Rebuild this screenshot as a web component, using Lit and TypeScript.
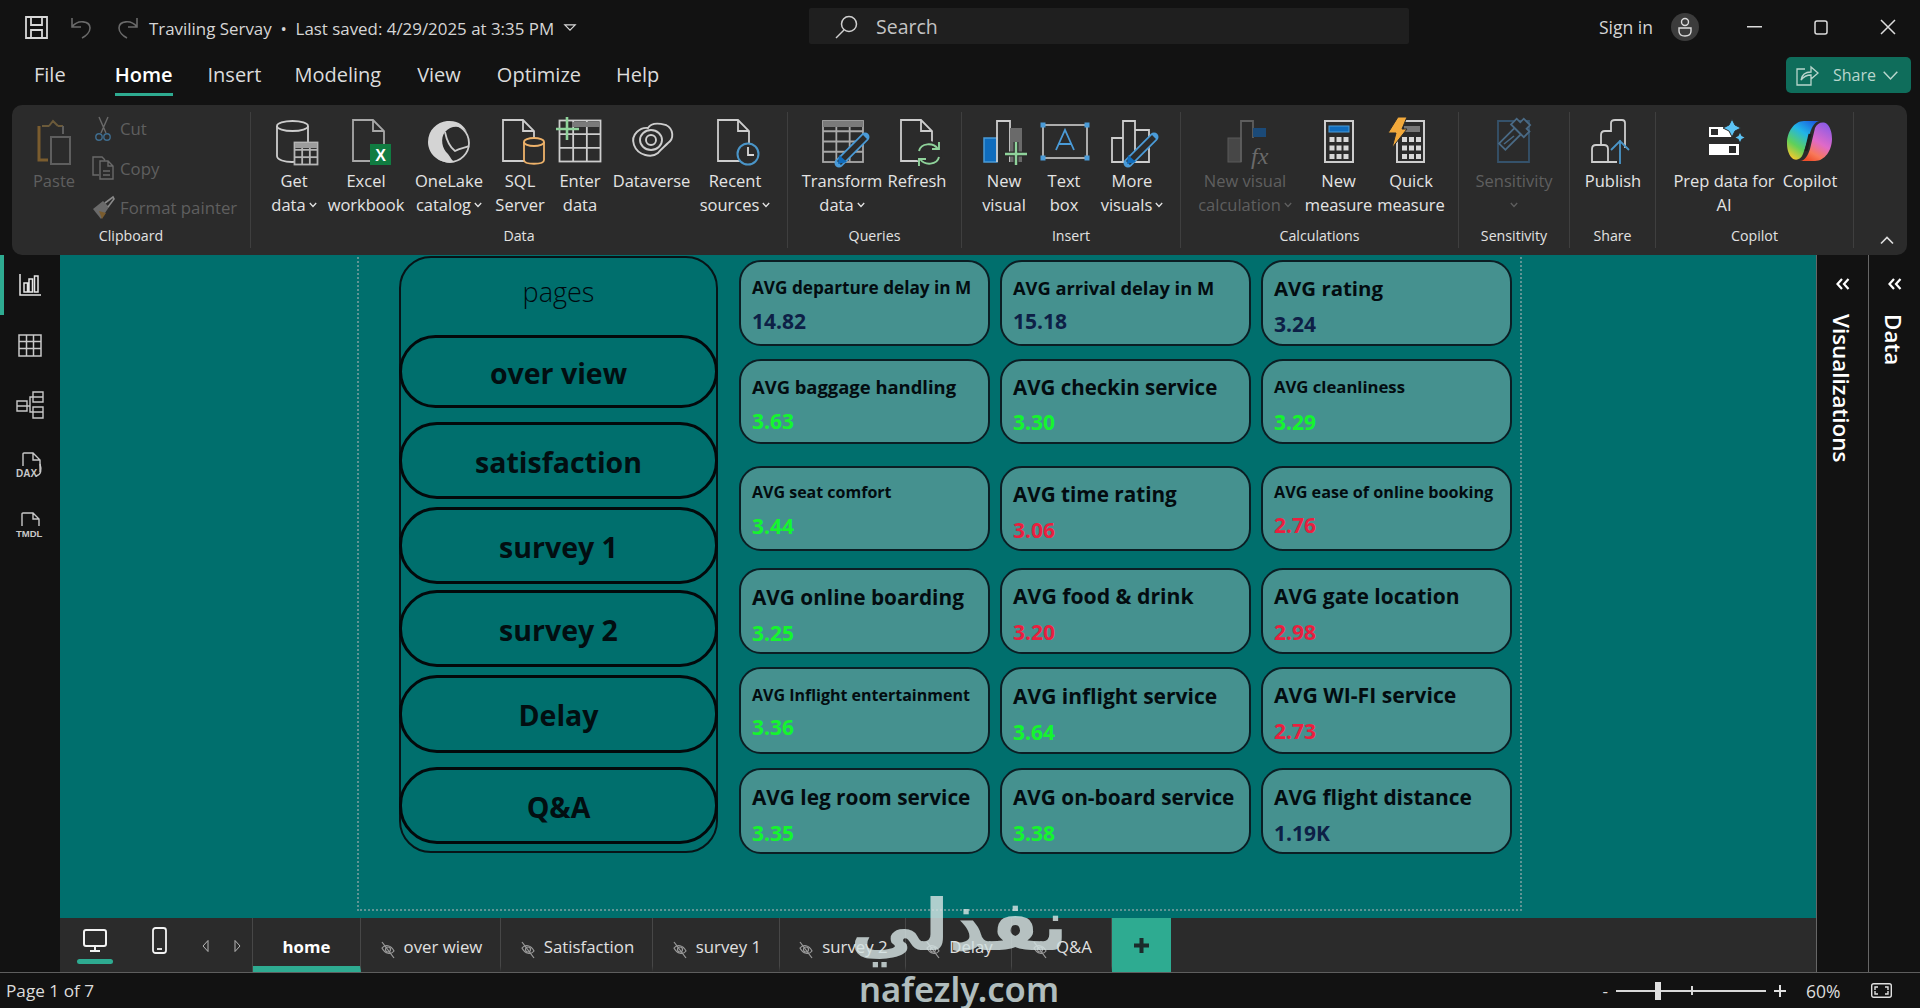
import { LitElement, html, css, svg } from "lit";
import { customElement } from "lit/decorators.js";

const S = "#cdcdcd";
const BG = "#2b2b2b";

const grid = (x: number, y: number, w: number, h: number, cols: number, rows: number, st = S, sw = 1.8) => {
  const ls = [];
  for (let i = 1; i < cols; i++) ls.push(svg`<line x1=${x + (w * i) / cols} y1=${y} x2=${x + (w * i) / cols} y2=${y + h} stroke=${st} stroke-width=${sw}/>`);
  for (let i = 1; i < rows; i++) ls.push(svg`<line x1=${x} y1=${y + (h * i) / rows} x2=${x + w} y2=${y + (h * i) / rows} stroke=${st} stroke-width=${sw}/>`);
  return svg`<rect x=${x} y=${y} width=${w} height=${h} fill=${BG} stroke=${st} stroke-width=${sw}/>${ls}`;
};
const doc = (x: number, y: number, st = S) => svg`<path d="M${x} ${y}H${x + 20}L${x + 31} ${y + 11}V${y + 41}H${x}Z M${x + 20} ${y}V${y + 11}H${x + 31}" fill="none" stroke=${st} stroke-width="1.8"/>`;
const pencil = (x1: number, y1: number, x2: number, y2: number) => svg`
  <line x1=${x1} y1=${y1} x2=${x2} y2=${y2} stroke="#4a9bd8" stroke-width="9" stroke-linecap="round"/>
  <line x1=${x1} y1=${y1} x2=${x2} y2=${y2} stroke=${BG} stroke-width="5.5"/>
  <path d="M${x2 - 1} ${y2 + 1}l1 -9 8 7z" fill="#0f6cbd"/>`;
const ic = (c: unknown) => html`<svg class="ic" width="48" height="48" viewBox="0 0 48 48" fill="none">${c}</svg>`;
const keys = (x: number, y: number, step: number) => {
  const r = [];
  for (let j = 0; j < 3; j++) for (let i = 0; i < 3; i++) r.push(svg`<rect x=${x + i * step} y=${y + j * 8.5} width="5" height="5" fill="#d8d8d8"/>`);
  return r;
};

const icons: Record<string, unknown> = {
  paste: ic(svg`<path d="M12 8H19M33 8H28M19 8l4-5 5 5" stroke="#6b5a3a" stroke-width="2"/><path d="M9 8V42H18" stroke="#7a5c2e" stroke-width="3"/><path d="M33 8V16" stroke="#5e5e5e" stroke-width="2"/><rect x="21" y="19" width="19" height="27" stroke="#5e5e5e" stroke-width="2" fill=${BG}/>`),
  get: ic(svg`<path d="M7 8V38C7 42 15 44 22 44C30 44 38 42 38 38V8" stroke=${S} stroke-width="1.8"/><ellipse cx="22.5" cy="8" rx="15.5" ry="5" stroke=${S} stroke-width="1.8"/>${grid(24.5, 24.5, 23, 22, 3, 3, "#b5b5b5")}<rect x="25" y="25" width="22" height="5" fill="#9c9c9c"/>`),
  excel: ic(svg`${doc(11, 2, "#a8a8a8")}<rect x="28" y="26" width="21" height="21" fill="#107c41"/><text x="38.5" y="42.5" text-anchor="middle" font-family="Liberation Sans" font-weight="700" font-size="16" fill="#fff">X</text>`),
  onelake: ic(svg`<circle cx="25" cy="25" r="19" stroke=${S} stroke-width="1.8"/><path d="M22 3C34 2 39 8 42 14C36 7 26 7 20 14C15 20 17 31 23 36C26 40 27 43 30 44C14 47 3 36 3 24C3 12 12 4 22 3Z" fill="#d4d4d4"/><path d="M20 14C22 24 26 30 30 33C35 30 40 30 44 28" stroke=${S} stroke-width="1.8"/>`),
  sql: ic(svg`${doc(7, 2)}<path d="M28 24V42C28 47 48 47 48 42V24" fill=${BG} stroke="#eeb26a" stroke-width="1.8"/><ellipse cx="38" cy="24" rx="10" ry="4" fill=${BG} stroke="#eeb26a" stroke-width="1.8"/>`),
  enter: ic(svg`${grid(3.5, 2.5, 41, 41, 3, 3)}<rect x="16" y="4" width="28" height="5" fill="#7a7a7a"/><path d="M0 11H23M11 -1V22" stroke="#8fd39b" stroke-width="2.6"/>`),
  dataverse: ic(svg`<path d="M6 27C2 16 13 9 20 10C24 3 34 6 38 7C46 11 46 21 40 25C36 29 33 31 30 35C24 40 10 38 6 27Z" stroke=${S} stroke-width="1.9"/><ellipse cx="23" cy="22" rx="11" ry="10" stroke=${S} stroke-width="1.9"/><circle cx="23" cy="22" r="5" stroke=${S} stroke-width="1.9"/>`),
  recent: ic(svg`${doc(7, 2)}<circle cx="37" cy="36" r="10.5" fill=${BG} stroke="#4a95c8" stroke-width="2"/><path d="M37 29V37H43" stroke="#d8d8d8" stroke-width="1.8"/>`),
  transform: ic(svg`${grid(5, 3, 40, 41, 3, 4, "#a8a8a8")}<rect x="5" y="3" width="40" height="6" fill="#7a7a7a"/>${pencil(47, 19, 21, 45)}`),
  refresh: ic(svg`${doc(8, 2)}<circle cx="36" cy="36" r="13" fill=${BG}/><path d="M26 33C28 25 40 24 45 31M46 24V31H39M46 39C44 47 32 48 27 41M26 48V41H33" stroke="#8fd39b" stroke-width="1.9"/>`),
  newvisual: ic(svg`<rect x="4" y="20" width="13" height="24" fill="#0f6cbd" stroke="#4a9bd8" stroke-width="1.5"/><path d="M17 44V3H30V44" stroke=${S} stroke-width="1.8"/><rect x="30" y="10" width="12" height="34" fill="#6a6a6a"/><path d="M25 36H47M36 24V47" stroke=${BG} stroke-width="5"/><path d="M25 36H47M36 24V47" stroke="#8fd39b" stroke-width="2.4"/>`),
  textbox: ic(svg`<rect x="3" y="7" width="44" height="33" stroke=${S} stroke-width="1.6"/><path d="M16 32L25 12L34 32M19 26H31" stroke="#4a9bd8" stroke-width="1.8"/><g fill="#4a9bd8"><rect x="0.5" y="4.5" width="5" height="5"/><rect x="44.5" y="4.5" width="5" height="5"/><rect x="0.5" y="37.5" width="5" height="5"/><rect x="44.5" y="37.5" width="5" height="5"/></g>`),
  morevisuals: ic(svg`<path d="M4 44V20H15V3H27V12H41V44Z M15 20V44 M27 12V44" stroke=${S} stroke-width="1.8"/>${pencil(46, 19, 20, 45)}`),
  calc: ic(svg`<rect x="7" y="20" width="13" height="24" fill="#474747" stroke="#5a5a5a"/><path d="M20 44V3H32V20" stroke="#5e5e5e" stroke-width="1.8"/><rect x="32" y="10" width="13" height="9" fill="#1b4a78"/><text x="30" y="46" font-family="Liberation Serif" font-style="italic" font-size="24" fill="#6a6a6a">fx</text>`),
  measure: ic(svg`<rect x="10" y="3" width="28" height="41" stroke=${S} stroke-width="2"/><rect x="14" y="8" width="20" height="6" fill="#0f6cbd" stroke="#4a9bd8"/>${keys(14.5, 19, 7)}`),
  quick: ic(svg`<rect x="10" y="3" width="27" height="41" stroke=${S} stroke-width="2"/><rect x="17" y="8" width="16" height="6" fill="#777"/>${keys(15, 19, 7)}<path d="M11 -1H20L15 11H20L5 30L9 15H1Z" fill="#f2a93b" stroke=${BG}/>`),
  sensitivity: ic(svg`<path d="M8 3H39V44H8Z" stroke="#35526b" stroke-width="1.8"/><g transform="rotate(-45 26 17)" fill=${BG} stroke="#4a6a85" stroke-width="1.8"><rect x="8" y="11" width="22" height="9"/><path d="M30 9H38V14H43V23H38V27H30Z" transform="translate(0 -3)"/></g><path d="M14 26L24 18" stroke="#4a6a85" stroke-width="1.6"/>`),
  publish: ic(svg`<path d="M10 44H3V31Q3 27 7 27H15Q19 27 19 31V44H10M12 27V17Q12 13 16 13H22V5Q22 2 26 2H33Q36 2 36 5V30M19 44H28" stroke=${S} stroke-width="1.8"/><path d="M31 46V22M22 32L31 23L40 32" stroke="#4a95c8" stroke-width="1.8"/>`),
  prep: ic(svg`<rect x="9" y="9" width="23" height="10" fill="#fff"/><rect x="11" y="11" width="7" height="6" fill="#2b2b2b"/><rect x="9" y="26" width="30" height="11" fill="#fff"/><rect x="29" y="28" width="7" height="7" fill="#2b2b2b"/><path d="M32 1L35 7L41 10L35 13L32 19L29 13L23 10L29 7Z" fill="#5cc3f5" stroke=${BG}/><path d="M40 15L41.500 18L44.500 19.500L41.500 21L40 24L38.500 21L35.500 19.500L38.500 18Z" fill="#5cc3f5"/>`),
  copilot: ic(svg`<defs><linearGradient id="cpa" x1="0.8" y1="0" x2="0.2" y2="1"><stop offset="0" stop-color="#1b5fe0"/><stop offset=".35" stop-color="#21b5e8"/><stop offset=".7" stop-color="#5fd05a"/><stop offset="1" stop-color="#f6c82c"/></linearGradient><linearGradient id="cpb" x1="0.8" y1="0" x2="0.3" y2="1"><stop offset="0" stop-color="#8a5be8"/><stop offset=".5" stop-color="#e06ac8"/><stop offset=".8" stop-color="#f8795a"/><stop offset="1" stop-color="#f0502c"/></linearGradient></defs><path d="M18 3H34C29 3 26 9 24 15L17 36C15 42 9 43 6 40C2 36 1 30 1 25C1 14 8 3 18 3Z" fill="url(#cpa)"/><path d="M29 43H14C19 43 22 37 24 31L29 10C31 5 37 3 41 6C45 10 46 16 46 21C46 32 39 43 29 43Z" fill="url(#cpb)"/><path d="M24 16L20 33" stroke="#1d1d1d" stroke-width="3"/>`),
};

interface Btn { w: number; l: string[]; i: string; chev?: boolean; off?: boolean; wide?: boolean }
interface Group { name: string; w: number; pad: number; btns: Btn[] }

const groups: Group[] = [
  { name: "Data", w: 537, pad: 11, btns: [
    { w: 64, l: ["Get", "data"], i: "get", chev: true },
    { w: 80, l: ["Excel", "workbook"], i: "excel" },
    { w: 86, l: ["OneLake", "catalog"], i: "onelake", chev: true },
    { w: 56, l: ["SQL", "Server"], i: "sql" },
    { w: 64, l: ["Enter", "data"], i: "enter" },
    { w: 79, l: ["Dataverse"], i: "dataverse" },
    { w: 88, l: ["Recent", "sources"], i: "recent", chev: true },
  ] },
  { name: "Queries", w: 174, pad: 12, btns: [
    { w: 84, l: ["Transform", "data"], i: "transform", chev: true },
    { w: 66, l: ["Refresh"], i: "refresh" },
  ] },
  { name: "Insert", w: 219, pad: 12, btns: [
    { w: 60, l: ["New", "visual"], i: "newvisual" },
    { w: 60, l: ["Text", "box"], i: "textbox" },
    { w: 76, l: ["More", "visuals"], i: "morevisuals", chev: true },
  ] },
  { name: "Calculations", w: 278, pad: 9, btns: [
    { w: 110, l: ["New visual", "calculation"], i: "calc", chev: true, off: true },
    { w: 77, l: ["New", "measure"], i: "measure" },
    { w: 68, l: ["Quick", "measure"], i: "quick" },
  ] },
  { name: "Sensitivity", w: 111, pad: 10, btns: [
    { w: 90, l: ["Sensitivity", ""], i: "sensitivity", chev: true, off: true },
  ] },
  { name: "Share", w: 86, pad: 8, btns: [{ w: 70, l: ["Publish"], i: "publish" }] },
  { name: "Copilot", w: 198, pad: 10, btns: [
    { w: 116, l: ["Prep data for", "AI"], i: "prep" },
    { w: 56, l: ["Copilot"], i: "copilot" },
  ] },
];

const menu = [
  { t: "File", m: 0 }, { t: "Home", active: true, m: 49 }, { t: "Insert", m: 35 }, { t: "Modeling", m: 33 },
  { t: "View", m: 36 }, { t: "Optimize", m: 36 }, { t: "Help", m: 35 },
];

const G = "#14f52e", R = "#ea1f3f", N = "#0d2046";
const rows: [number, number][] = [[261, 345], [360, 443], [467, 550], [569, 653], [668, 753], [769, 853]];
const colX = [740, 1001, 1262];
const cards: [number, number, string, number, number, number, string, string][] = [
  [0, 0, "AVG departure delay in M", 17.2, 288, 321, "14.82", N],
  [0, 1, "AVG arrival delay in M", 18.3, 288, 321, "15.18", N],
  [0, 2, "AVG rating", 20.4, 288, 324, "3.24", N],
  [1, 0, "AVG baggage handling", 18.4, 387, 421, "3.63", G],
  [1, 1, "AVG checkin service", 20.5, 387, 422, "3.30", G],
  [1, 2, "AVG cleanliness", 16.7, 387, 422, "3.29", G],
  [2, 0, "AVG seat comfort", 16, 492, 526, "3.44", G],
  [2, 1, "AVG time rating", 20.7, 494, 530, "3.06", R],
  [2, 2, "AVG ease of online booking", 16.2, 492, 525, "2.76", R],
  [3, 0, "AVG online boarding", 20.8, 597, 633, "3.25", G],
  [3, 1, "AVG food & drink", 21.2, 596, 632, "3.20", R],
  [3, 2, "AVG gate location", 21, 596, 632, "2.98", R],
  [4, 0, "AVG Inflight entertainment", 16, 695, 727, "3.36", G],
  [4, 1, "AVG inflight service", 21, 696, 732, "3.64", G],
  [4, 2, "AVG WI-FI service", 21.2, 695, 731, "2.73", R],
  [5, 0, "AVG leg room service", 20.8, 797, 833, "3.35", G],
  [5, 1, "AVG on-board service", 20.8, 797, 833, "3.38", G],
  [5, 2, "AVG flight distance", 20.9, 797, 833, "1.19K", N],
];
const pills: [string, number, number][] = [
  ["over view", 336, 407], ["satisfaction", 423, 498], ["survey 1", 508, 583],
  ["survey 2", 591, 666], ["Delay", 676, 752], ["Q&A", 768, 843],
];
const tabs = [
  { t: "home", w: 108, on: true }, { t: "over wiew", w: 140 }, { t: "Satisfaction", w: 152 }, { t: "survey 1", w: 127 },
  { t: "survey 2", w: 126 }, { t: "Delay", w: 106 }, { t: "Q&A", w: 100 },
];
const hiddenIcon = html`<svg class="eye" width="18" height="20" viewBox="0 0 18 20" fill="none" stroke="#9a9a9a" stroke-width="1.2"><path d="M3 9C6 5 12 6 15 12C12 16 6 15 3 9Z"/><circle cx="9" cy="10.500" r="2.500"/><path d="M3 3L15 19"/></svg>`;

@customElement("app-root")
export class AppRoot extends LitElement {
  static styles = css`
    :host { display: block; position: relative; width: 1920px; height: 1008px; overflow: hidden; background: #121212; color: #e4e4e4; font-family: "Open Sans", "Noto Sans", sans-serif; }
    svg { display: block; overflow: visible; flex: none; }
    .title { height: 50px; box-sizing: border-box; padding-top: 4px; display: flex; align-items: center; }
    .title .save { margin-left: 25px; }
    .title .undo { margin-left: 22px; }
    .title .redo { margin-left: 23px; }
    .doc-name { margin-left: 10px; margin-top: 3px; font-size: 16.900px; color: #d6d6d6; white-space: nowrap; width: 403px; }
    .tri { margin-left: 12px; }
    .search { margin-left: 233px; margin-top: -2px; width: 600px; height: 36px; background: #1f1f1f; border-radius: 2px; display: flex; align-items: center; font-size: 19.500px; color: #c4c4c4; padding-top: 1px; box-sizing: border-box; }
    .search svg { margin: 0 17px 0 25px; }
    .sign { margin-left: 190px; font-size: 17.500px; color: #d6d6d6; width: 72px; white-space: nowrap; }
    .avatar { width: 28px; height: 28px; border-radius: 50%; background: #3c3c3c; display: grid; place-items: center; }
    .win { display: flex; margin-left: 48px; gap: 52px; align-items: center; }
    .menu { height: 55px; display: flex; align-items: flex-start; padding-left: 34px; font-size: 20px; color: #dcdcdc; position: relative; }
    .menu .item { height: 46px; display: flex; align-items: center; padding-top: 6px; box-sizing: border-box; border-bottom: 3px solid transparent; }
    .menu .on { color: #fff; font-weight: 600; border-bottom-color: #2eab91; }
    .share { margin-left: auto; margin-right: 9px; margin-top: 7px; width: 125px; height: 36px; background: #0f6d5b; border-radius: 5px; display: flex; align-items: center; font-size: 16px; color: #b9d6cd; box-sizing: border-box; padding-left: 10px; }
    .share span { margin: 0 7px 0 14px; }
    .ribbon { height: 150px; margin: 0 13px 0 12px; box-sizing: border-box; padding-top: 7px; background: #2b2b2b; border-radius: 10px; display: flex; font-size: 16.500px; color: #e4e4e4; }
    .group { box-sizing: border-box; height: 136px; padding-top: 6px; display: flex; flex-direction: column; flex: none; border-right: 1px solid #3f3f3f; }
    .group .row { flex: none; height: 107px; display: flex; }
    .gname { height: 22px; line-height: 22px; text-align: center; font-size: 14.200px; color: #e2e2e2; }
    .btn { display: flex; flex-direction: column; align-items: center; flex: none; }
    .btn .label { margin-top: 3px; text-align: center; line-height: 24px; white-space: nowrap; }
    .btn .label div { height: 24px; display: flex; justify-content: center; align-items: center; gap: 3px; }
    .btn.off { color: #5f5f5f; }
    .chev { display: inline-block; flex: none; }
    .clip { width: 239px; }
    .clip .row { padding-left: 12px; }
    .small { margin-top: -9px; margin-left: 8px; display: flex; flex-direction: column; color: #5f5f5f; font-size: 16.800px; }
    .small div { flex: none; height: 39.500px; display: flex; align-items: center; gap: 5px; }
    .small svg { width: 23px; }
    .collapse { margin-left: 26px; margin-top: 118px; height: 20px; }
    .main { height: 717px; display: flex; }
    .rail { width: 60px; flex: none; }
    .rail div { height: 60px; display: grid; place-items: center; }
    .rail .on { box-shadow: inset 4px 0 0 #2eab91; }
    .work { flex: none; width: 1756px; display: flex; flex-direction: column; }
    .canvas { height: 663px; background: #006f6d; position: relative; overflow: hidden; }
    .frame { position: absolute; left: 297px; top: -2px; width: 1161px; height: 654px; border: 2px dotted #5f9494; box-sizing: content-box; }
    .panel { position: absolute; box-sizing: border-box; border: 2px solid #071417; border-radius: 32px; font-size: 27px; font-weight: 300; color: #000a10; text-align: center; padding-top: 15px; line-height: 38px; }
    .pill { position: absolute; box-sizing: border-box; border: 3px solid #03090b; border-radius: 38px; background: #006f6d; display: grid; place-items: center; font-size: 28.500px; font-weight: 700; color: #020e11; padding-top: 2px; }
    .card { position: absolute; box-sizing: border-box; border: 2px solid #0b1e24; border-radius: 22px; background: #45918f; padding-left: 11px; white-space: nowrap; }
    .card .t { font-weight: 700; color: #030c10; line-height: 28px; }
    .card .v { font-weight: 700; font-size: 21px; line-height: 30px; }
    .tabbar { height: 54px; background: #2b2b2b; display: flex; }
    .views { width: 193px; flex: none; box-sizing: border-box; display: flex; border-right: 1px solid #474747; }
    .v1 { width: 62px; height: 54px; display: flex; flex-direction: column; align-items: center; padding-top: 11px; box-sizing: border-box; margin-left: 4px; }
    .v1 i { display: block; margin-top: 7px; width: 36px; height: 5px; border-radius: 3px; background: #2eab91; }
    .v2 { margin-left: 26px; padding-top: 9px; width: 30px; }
    .arrows { display: flex; gap: 25px; margin-left: 20px; padding-top: 22px; }
    .tab { box-sizing: border-box; flex: none; height: 54px; display: flex; align-items: center; justify-content: center; gap: 7px; border-right: 1px solid #474747; font-size: 16.800px; color: #e0e0e0; padding-top: 8px; border-bottom: 6px solid transparent; }
    .tab .eye { margin-top: 6px; }
    .tab.on { font-weight: 700; color: #fff; border-bottom-color: #2eab91; }
    .tab span { white-space: nowrap; }
    .plus { width: 59px; flex: none; background: #2eab91; display: grid; place-items: center; }
    .pane { width: 51px; flex: none; border-left: 1px solid #666; display: flex; flex-direction: column; align-items: center; padding-top: 23px; font-size: 22.400px; font-weight: 600; color: #fff; }
    .pane b { writing-mode: vertical-rl; margin-top: 24px; font-weight: 600; line-height: 24px; margin-right: 4px; }
    .status { height: 35px; border-top: 1px solid #5e5e5e; display: flex; align-items: center; font-size: 17.200px; color: #dcdcdc; padding-left: 6px; }
    .zoom { margin-left: auto; display: flex; align-items: center; }
    .slider { position: relative; width: 150px; height: 2px; background: #d8d8d8; margin: 0 8px 0 8px; }
    .thumb { position: absolute; left: 39px; top: -8px; width: 6px; height: 18px; background: #e0e0e0; }
    .tick { position: absolute; left: 75px; top: -4px; width: 2px; height: 9px; background: #d8d8d8; }
    .pct { font-size: 17.500px; margin: 0 30px 0 20px; width: 35px; white-space: nowrap; }
    .fit { margin-right: 28px; }
    .mark { position: absolute; left: 833px; top: 880px; width: 252px; text-align: center; color: #d5e3e3; opacity: .82; pointer-events: none; }
    .mark .ar { font-family: "DejaVu Sans", sans-serif; font-weight: 700; font-size: 71px; line-height: 92px; white-space: nowrap; }
    .mark .en { font-family: "Noto Sans", sans-serif; font-weight: 600; font-size: 34.500px; line-height: 34px; white-space: nowrap; }
  `;

  private chev(color = "currentColor") {
    return html`<svg class="chev" width="8" height="6" viewBox="0 0 8 6" fill="none" stroke=${color} stroke-width="1.300"><path d="M.8 1L4 4.500L7.200 1"/></svg>`;
  }

  private renderBtn(b: Btn) {
    return html`<div class="btn ${b.off ? "off" : ""}" style="width:${b.w}px">
      ${icons[b.i]}
      <div class="label">${b.l.map((t, i) => html`<div>${t}${b.chev && i === b.l.length - 1 ? this.chev() : ""}</div>`)}</div>
    </div>`;
  }

  render() {
    return html`
      <div class="title">
        <svg class="save" width="23" height="23" viewBox="0 0 23 23" fill="none" stroke="#d8d8d8" stroke-width="1.800"><path d="M1 1H22V22H1Z M6 1V9H17V1 M6 22V14H17V22"/></svg>
        <svg class="undo" width="23" height="23" viewBox="0 0 23 23" fill="none" stroke="#6a6a6a" stroke-width="1.600"><path d="M2 2V11H11 M2 11C8 3 20 5 20 12C20 16 16 20 12 22"/></svg>
        <svg class="redo" width="23" height="23" viewBox="0 0 23 23" fill="none" stroke="#6a6a6a" stroke-width="1.600"><path d="M21 2V11H12 M21 11C15 3 3 5 3 12C3 16 7 20 11 22"/></svg>
        <div class="doc-name">Traviling Servay &nbsp;•&nbsp; Last saved: 4/29/2025 at 3:35 PM</div>
        <svg class="tri" width="12" height="7" viewBox="0 0 12 7" fill="none" stroke="#d8d8d8" stroke-width="1.200"><path d="M.8.8H11.200L6 6.200Z"/></svg>
        <div class="search">
          <svg width="25" height="24" viewBox="0 0 25 24" fill="none" stroke="#d0d0d0" stroke-width="1.500"><circle cx="15" cy="9" r="7.500"/><path d="M10 15L2 23"/></svg>
          Search
        </div>
        <div class="sign">Sign in</div>
        <div class="avatar"><svg width="14" height="20" viewBox="0 0 14 20" fill="none" stroke="#dcdcdc" stroke-width="1.400"><circle cx="7" cy="5" r="3.500"/><path d="M1 11H13V14C13 18 10 19 7 19C4 19 1 18 1 14Z"/></svg></div>
        <div class="win">
          <svg width="15" height="2" viewBox="0 0 15 2"><rect width="15" height="1.500" fill="#dcdcdc"/></svg>
          <svg width="14" height="15" viewBox="0 0 14 15" fill="none" stroke="#dcdcdc" stroke-width="1.500"><rect x="1" y="1" width="12" height="13" rx="2"/></svg>
          <svg width="16" height="16" viewBox="0 0 16 16" fill="none" stroke="#dcdcdc" stroke-width="1.500"><path d="M1 1L15 15M15 1L1 15"/></svg>
        </div>
      </div>

      <div class="menu">
        ${menu.map((m) => html`<div class="item ${m.active ? "on" : ""}" style="margin-left:${m.m}px">${m.t}</div>`)}
        <div class="share">
          <svg width="23" height="22" viewBox="0 0 23 22" fill="none" stroke="#b9d6cd" stroke-width="1.300"><path d="M9 5H1V21H15V15 M5 16C6 10 10 8 15 8V3L22 9L15 15V11C11 11 8 12 5 16Z"/></svg>
          <span>Share</span>
          <svg width="15" height="9" viewBox="0 0 15 9" fill="none" stroke="#b9d6cd" stroke-width="1.500"><path d="M.7.7L7.500 8L14.300.7"/></svg>
        </div>
      </div>

      <div class="ribbon">
        <div class="group clip">
          <div class="row">
            ${this.renderBtn({ w: 60, l: ["Paste"], i: "paste", off: true })}
            <div class="small">
              <div><svg height="24" viewBox="0 0 23 24" fill="none" stroke-width="1.400"><path d="M7 0L14 16M16 0L9 16" stroke="#6a6a6a"/><circle cx="7" cy="20" r="3.200" stroke="#3f6d8f"/><circle cx="15" cy="20" r="3.200" stroke="#3f6d8f"/></svg>Cut</div>
              <div><svg height="24" viewBox="0 0 23 24" fill="none" stroke="#6a6a6a" stroke-width="1.400"><path d="M7 19H1V1H10L13 4 M8 5H16L21 10V23H8Z M16 5V10H21 M11 15H18M11 19H18"/></svg>Copy</div>
              <div><svg height="24" viewBox="0 0 23 24" fill="none"><path d="M1 13L11 5L17 11L9 23Z" fill="#6a6a6a"/><path d="M7 15L10 23L14 17Z" fill="#7a5c2e"/><path d="M13 7L21 1L22 3L16 11" stroke="#8a8a8a" stroke-width="1.600"/></svg>Format painter</div>
            </div>
          </div>
          <div class="gname">Clipboard</div>
        </div>
        ${groups.map((g) => html`<div class="group" style="width:${g.w}px">
          <div class="row" style="padding-left:${g.pad}px">${g.btns.map((b) => this.renderBtn(b))}</div>
          <div class="gname">${g.name}</div>
        </div>`)}
        <svg class="collapse" width="14" height="9" viewBox="0 0 14 9" fill="none" stroke="#dcdcdc" stroke-width="1.700"><path d="M1 8L7 2L13 8"/></svg>
      </div>

      <div class="main">
        <div class="rail">
          <div class="on"><svg width="22" height="22" viewBox="0 0 22 22" fill="none" stroke="#e6e6e6" stroke-width="1.500"><path d="M1 0V21H22 M5 9H8.500V18H5Z M10 5H13.500V18H10Z M15.500 2H19V18H15.500Z"/></svg></div>
          <div><svg width="24" height="23" viewBox="0 0 24 23" fill="none" stroke="#c8c8c8" stroke-width="1.500"><path d="M1 1H23V22H1Z M1 7.500H23 M1 14.500H23 M8.500 1V22 M15.500 1V22"/></svg></div>
          <div><svg width="28" height="28" viewBox="0 0 28 28" fill="none" stroke="#c8c8c8" stroke-width="1.400"><path d="M1 10H11V20H1Z M1 15H11 M17 1H27V11H17Z M17 6H27 M17 16H27V27H17Z M17 21H27 M11 15H14V6H17 M14 15V21H17"/></svg></div>
          <div><svg width="28" height="26" viewBox="0 0 28 26" fill="none" stroke="#c8c8c8" stroke-width="1.400"><path d="M7 14V2Q7 1 8 1H17L24 8V20 M17 1V8H24"/><path d="M24 12C26 18 25 23 20 24"/><text x="0" y="25" font-family="Liberation Sans" font-weight="700" font-size="10" fill="#c8c8c8" stroke="none">DAX</text></svg></div>
          <div><svg width="28" height="26" viewBox="0 0 28 26" fill="none" stroke="#c8c8c8" stroke-width="1.400"><path d="M6 14V2Q6 1 7 1H17L23 7V14 M17 1V7H23"/><text x="0" y="25" font-family="Liberation Sans" font-weight="700" font-size="9.500" fill="#c8c8c8" stroke="none">TMDL</text></svg></div>
        </div>

        <div class="work">
          <div class="canvas">
            <div class="frame"></div>
            <div class="panel" style="left:339px;top:1px;width:319px;height:597px">pages</div>
            ${pills.map(([t, a, b]) => html`<div class="pill" style="left:339px;top:${a - 256}px;width:319px;height:${b - a + 2}px">${t}</div>`)}
            ${cards.map(([r, c, t, fs, ty, vy, v, col]) => {
              const top = rows[r][0];
              return html`<div class="card" style="left:${colX[c] - 61}px;top:${top - 256}px;width:251px;height:${rows[r][1] - top + 2}px">
                <div class="t" style="font-size:${fs}px;margin-top:${ty - top - 15}px">${t}</div>
                <div class="v" style="color:${col};margin-top:${vy - ty - 29}px">${v}</div>
              </div>`;
            })}
          </div>
          <div class="tabbar">
            <div class="views">
              <div class="v1">
                <svg width="24" height="23" viewBox="0 0 24 23" fill="none" stroke="#f2f2f2" stroke-width="2"><rect x="1" y="1" width="22" height="16" rx="2"/><path d="M12 17V21M7 22H17"/></svg>
                <i></i>
              </div>
              <div class="v2"><svg width="15" height="27" viewBox="0 0 15 27" fill="none" stroke="#f2f2f2" stroke-width="1.800"><rect x="1" y="1" width="13" height="25" rx="2.500"/><path d="M5 22H10"/></svg></div>
              <div class="arrows">
                <svg width="7" height="12" viewBox="0 0 7 12" fill="none" stroke="#b8b8b8"><path d="M6 .5L1 6L6 11.500Z"/></svg>
                <svg width="7" height="12" viewBox="0 0 7 12" fill="none" stroke="#b8b8b8"><path d="M1 .5L6 6L1 11.500Z"/></svg>
              </div>
            </div>
            ${tabs.map((t) => html`<div class="tab ${t.on ? "on" : ""}" style="width:${t.w}px">${t.on ? "" : hiddenIcon}<span>${t.t}</span></div>`)}
            <div class="plus"><svg width="15" height="15" viewBox="0 0 15 15" fill="#1b2b2b"><path d="M5.500 0H9.500V5.500H15V9.500H9.500V15H5.500V9.500H0V5.500H5.500Z"/></svg></div>
          </div>
        </div>

        <div class="pane">
          <svg width="14" height="12" viewBox="0 0 14 12" fill="none" stroke="#fff" stroke-width="2.200"><path d="M6 1L1.500 6L6 11M12.500 1L8 6L12.500 11"/></svg>
          <b>Visualizations</b>
        </div>
        <div class="pane">
          <svg width="14" height="12" viewBox="0 0 14 12" fill="none" stroke="#fff" stroke-width="2.200"><path d="M6 1L1.500 6L6 11M12.500 1L8 6L12.500 11"/></svg>
          <b>Data</b>
        </div>
      </div>

      <div class="status">
        <span>Page 1 of 7</span>
        <div class="zoom">
          <span>-</span>
          <div class="slider"><div class="thumb"></div><div class="tick"></div></div>
          <svg width="12" height="12" viewBox="0 0 12 12" stroke="#e0e0e0" stroke-width="2"><path d="M0 6H12M6 0V12"/></svg>
          <div class="pct">60%</div>
          <svg class="fit" width="21" height="15" viewBox="0 0 21 15" fill="none" stroke="#e0e0e0" stroke-width="1.400"><rect x=".7" y=".7" width="19.600" height="13.600" rx="2"/><path d="M7 4H4V7 M14 4H17V7 M7 11H4V8 M14 11H17V8"/></svg>
        </div>
      </div>

      <div class="mark"><div class="ar">نفذلي</div><div class="en">nafezly.com</div></div>
    `;
  }
}
